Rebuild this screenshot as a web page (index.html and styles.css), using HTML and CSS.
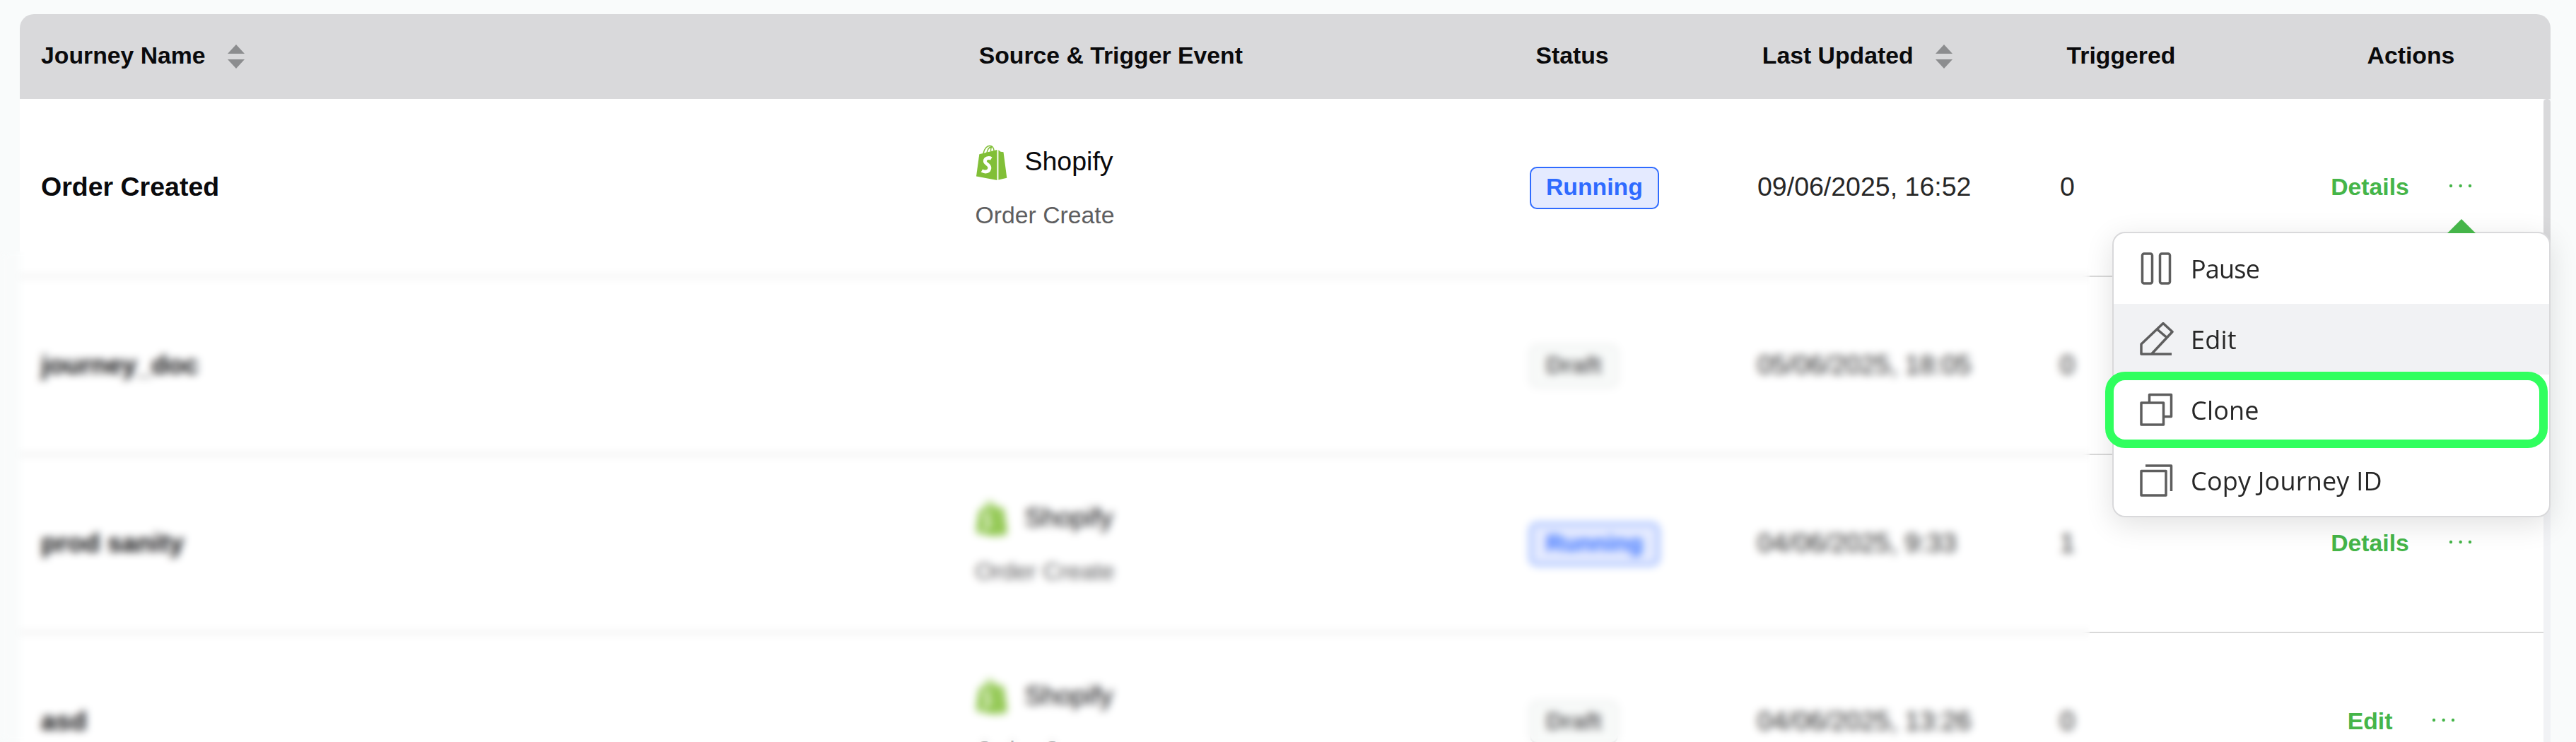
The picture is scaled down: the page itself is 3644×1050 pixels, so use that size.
FILE: index.html
```
<!DOCTYPE html>
<html lang="en">
<head>
  <meta charset="UTF-8">
  <title>Journeys</title>
  <link rel="stylesheet" href="styles.css">
</head>
<body>
<svg class="sprite">
  <symbol id="shopify" viewBox="0 0 44 50">
    <path d="M4.3 13.3L29.500 7v42.9L0 44.5z" fill="#81bf37"/>
    <path d="M31.4 7.2l3.2 2.6 3.9.4 4.8 36.6-11.9 2.8z" fill="#81bf37"/>
    <path d="M10 12C11.500 5 15.500 1.300 19 1.200c3.500 0 5.700 3 6.200 7.500M15 11c1-4.500 3-7.500 6-8M21.500 2.500c-.8 2-1 4-1 7" fill="none" stroke="#81bf37" stroke-width="1.500"/>
    <path d="M21.300 19.500c-3.500-2-8.800-.8-9 3.300-.2 4.300 7 4.600 6.600 10-.4 5-5.700 6.600-11 3.700" fill="none" stroke="#fff" stroke-width="4.800"/>
  </symbol>
  <symbol id="dots" viewBox="0 0 34 8">
    <g fill="#45b549"><circle cx="3" cy="4" r="2.200"/><circle cx="16.700" cy="4" r="2.200"/><circle cx="30" cy="4" r="2.200"/></g>
  </symbol>
  <symbol id="sort" viewBox="0 0 24 34">
    <path d="M12 0l12 13H0zM12 34L0 21h24z" fill="#8c8d8f"/>
  </symbol>
</svg>

<div class="table">
  <div class="thead">
    <div class="cell">Journey Name <svg class="sort"><use href="#sort"/></svg></div>
    <div class="cell">Source &amp; Trigger Event</div>
    <div class="cell">Status</div>
    <div class="cell">Last Updated <svg class="sort"><use href="#sort"/></svg></div>
    <div class="cell">Triggered</div>
    <div class="cell actions">Actions</div>
  </div>
  <div class="tbody">
    <div class="rows">
      <div class="row">
        <div class="cell name">Order Created</div>
        <div class="cell source">
          <div class="app"><svg><use href="#shopify"/></svg>Shopify</div>
          <div class="event">Order Create</div>
        </div>
        <div class="cell"><span class="tag running">Running</span></div>
        <div class="cell date">09/06/2025, 16:52</div>
        <div class="cell">0</div>
        <div class="cell actions"><a>Details</a><svg class="dots"><use href="#dots"/></svg></div>
      </div>
      <div class="row">
        <div class="cell name">journey_doc</div>
        <div class="cell source"></div>
        <div class="cell"><span class="tag draft">Draft</span></div>
        <div class="cell date">05/06/2025, 18:05</div>
        <div class="cell">0</div>
        <div class="cell actions"></div>
      </div>
      <div class="row">
        <div class="cell name">prod sanity</div>
        <div class="cell source">
          <div class="app"><svg><use href="#shopify"/></svg>Shopify</div>
          <div class="event">Order Create</div>
        </div>
        <div class="cell"><span class="tag running">Running</span></div>
        <div class="cell date">04/06/2025, 9:33</div>
        <div class="cell">1</div>
        <div class="cell actions"><a>Details</a><svg class="dots"><use href="#dots"/></svg></div>
      </div>
      <div class="row">
        <div class="cell name">asd</div>
        <div class="cell source">
          <div class="app"><svg><use href="#shopify"/></svg>Shopify</div>
          <div class="event">Order Create</div>
        </div>
        <div class="cell"><span class="tag draft">Draft</span></div>
        <div class="cell date">04/06/2025, 13:26</div>
        <div class="cell">0</div>
        <div class="cell actions"><a>Edit</a><svg class="dots"><use href="#dots"/></svg></div>
      </div>
    </div>
    <div class="scrollbar"><div class="thumb"></div></div>
  </div>
</div>

<div class="blur"></div>

<div class="menu">
  <div class="caret"></div>
  <div class="item pause">
    <svg viewBox="0 0 48 48"><rect x="3.500" y="3" width="14" height="42" rx="2.500"/><rect x="28.500" y="3" width="14" height="42" rx="2.500"/></svg>
    Pause
  </div>
  <div class="item active">
    <svg viewBox="0 0 48 48"><path d="M45 45H2V31L33 1.500 46 13.500 17 44.500M24.500 10L38 21.500"/></svg>
    Edit
  </div>
  <div class="item">
    <svg viewBox="0 0 48 48"><path d="M2 14h31.500v31H2zM13.500 14V2.500h31v31h-11"/></svg>
    Clone
    <div class="highlight"></div>
  </div>
  <div class="item">
    <svg viewBox="0 0 48 48"><path d="M2 10.500h35v34.500H2zM8 3h36.500v36"/></svg>
    Copy Journey ID
  </div>
</div>
</body>
</html>
```
FILE: styles.css
```
* {
  box-sizing: border-box;
}

body {
  margin: 0;
  padding: 20px 36px 0 28px;
  height: 1050px;
  overflow: hidden;
  position: relative;
  background: #f9fbfb;
  font-family: "Liberation Sans", Arial, sans-serif;
  font-size: 37.5px;
  color: #272727;
}

.sprite {
  display: none;
}

.table {
  width: 3580px;
}

.thead,
.row {
  display: grid;
  grid-template-columns: 1321.5fr 785.5fr 319.5fr 429.5fr 313fr 401fr;
}

.thead {
  height: 120px;
  padding-bottom: 3px;
  background: #d9d9db;
  border-radius: 20px 20px 0 0;
  font-size: 33.75px;
  font-weight: bold;
  color: #0a0a0c;
}

.cell {
  display: flex;
  align-items: center;
  padding-left: 30px;
  white-space: nowrap;
}

.thead .cell + .cell {
  padding-left: 31.5px;
}

.row .date {
  padding-left: 31.5px;
}

.row .actions {
  justify-content: center;
  padding-left: 0;
}

.thead .cell.actions {
  justify-content: center;
  padding-left: 7px;
}

.sort {
  width: 24px;
  height: 34px;
  margin: 3px 0 0 31px;
}

.tbody {
  display: flex;
  height: 910px;
  overflow: hidden;
}

.rows {
  width: 3570px;
  background: #fff;
}

.row {
  height: 252px;
  padding-bottom: 2px;
  border-bottom: 2px solid #d9d9d9;
}

.name {
  font-weight: bold;
  color: #0a0a0c;
}

.source {
  flex-direction: column;
  align-items: flex-start;
  justify-content: center;
}

.app {
  display: flex;
  align-items: center;
  height: 60px;
  margin-top: -2px;
  color: #0a0a0c;
}

.app svg {
  width: 44px;
  height: 50px;
  margin: 4px 25px 0 1px;
}

.event {
  margin-top: 22px;
  line-height: 48px;
  font-size: 33.75px;
  color: #5e5e60;
}

.tag {
  height: 60px;
  padding: 0 21px;
  border: 2px solid;
  border-radius: 10px;
  line-height: 52px;
  font-size: 33.75px;
  font-weight: bold;
  margin: 3px 0 0 -1px;
}

.running {
  color: #2f6bff;
  background: #e4eaff;
}

.draft {
  color: #5e5e60;
  background: #f8faf9;
  border-color: #e2e4e4;
}

.actions a {
  font-size: 33.75px;
  font-weight: bold;
  color: #45b549;
}

.dots {
  width: 34px;
  height: 8px;
  margin: -2px 0 0 56px;
}

.scrollbar {
  width: 10px;
  background: #f1f2f5;
}

.thumb {
  height: 500px;
  border-radius: 5px;
  background: #d9d9db;
}

/* hides the other journeys */
.blur {
  position: absolute;
  left: 0;
  top: 355px;
  width: 2956px;
  height: 695px;
  backdrop-filter: blur(6px);
}

.menu {
  position: absolute;
  left: 2988px;
  top: 328px;
  width: 620px;
  border: 2px solid #d9d9db;
  border-radius: 18px;
  background: #fff;
  box-shadow: 0 10px 40px rgba(0, 0, 0, 0.12);
  font-family: "Open Sans", "Noto Sans", sans-serif;
  font-size: 36px;
}

.caret {
  position: absolute;
  left: 472px;
  top: -20px;
  width: 40px;
  height: 20px;
  background: #45b549;
  clip-path: polygon(50% 0, 100% 100%, 0 100%);
}

.item {
  position: relative;
  display: flex;
  align-items: center;
  gap: 24px;
  height: 100px;
  padding: 0 0 0 37px;
  letter-spacing: 0.2px;
}

.pause {
  letter-spacing: -0.8px;
}

.item svg {
  width: 48px;
  height: 48px;
  fill: none;
  stroke: #5e5e5e;
  stroke-width: 3.5;
  stroke-linejoin: round;
}

.active {
  background: #f1f2f4;
}

.highlight {
  position: absolute;
  left: -12px;
  top: -4px;
  width: 626px;
  height: 108px;
  border: 12px solid #30ff5e;
  border-radius: 28px;
}
```
